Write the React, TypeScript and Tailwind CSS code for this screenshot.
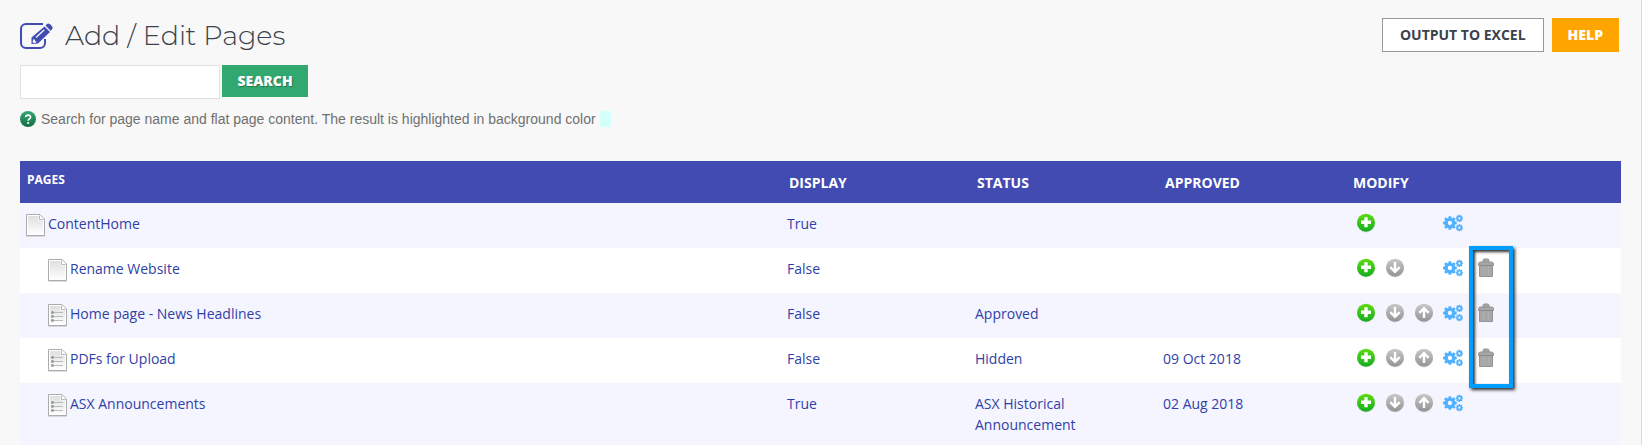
type Action = 'add' | 'down' | 'up' | 'settings' | 'delete';

type Page = {
  name: string;
  child: boolean;
  list: boolean;
  display: string;
  status: string;
  approved: string;
  actions: Action[];
};

const slots: Action[] = ['add', 'down', 'up', 'settings', 'delete'];

const labels: Record<Action, string> = {
  add: 'Add page',
  down: 'Move down',
  up: 'Move up',
  settings: 'Settings',
  delete: 'Delete page',
};

const pages: Page[] = [
  { name: 'ContentHome', child: false, list: false, display: 'True', status: '', approved: '', actions: ['add', 'settings'] },
  { name: 'Rename Website', child: true, list: false, display: 'False', status: '', approved: '', actions: ['add', 'down', 'settings', 'delete'] },
  { name: 'Home page - News Headlines', child: true, list: true, display: 'False', status: 'Approved', approved: '', actions: ['add', 'down', 'up', 'settings', 'delete'] },
  { name: 'PDFs for Upload', child: true, list: true, display: 'False', status: 'Hidden', approved: '09 Oct 2018', actions: ['add', 'down', 'up', 'settings', 'delete'] },
  { name: 'ASX Announcements', child: true, list: true, display: 'True', status: 'ASX Historical Announcement', approved: '02 Aug 2018', actions: ['add', 'down', 'up', 'settings'] },
];

export default function App() {
  return (
    <div className="h-screen overflow-hidden border-r border-[#dcdcdc] bg-[#f8f8f8] pl-5 pr-5 pt-[18px] font-['Open_Sans',sans-serif]">
      <header className="flex items-start justify-between pr-0.5">
        <div className="flex h-9 items-center gap-3">
          <EditIcon />
          <h1 className="font-[Montserrat,Inter,sans-serif] text-[27px] font-light leading-9 text-[#3b424d]">Add / Edit Pages</h1>
        </div>
        <div className="flex gap-2">
          <button className="h-[34px] border border-[#999] bg-white px-[17px] text-sm font-bold text-[#3b424d]">OUTPUT TO EXCEL</button>
          <button className="h-[34px] bg-[#ffa500] px-4 text-sm font-extrabold text-white">HELP</button>
        </div>
      </header>

      <form className="mt-[11px] flex items-start gap-0.5" onSubmit={(e) => e.preventDefault()}>
        <input aria-label="Search pages" className="h-[34px] w-[200px] border border-[#e0e0e0] bg-white px-2 text-sm outline-none" />
        <button className="h-8 w-[86px] bg-[#32a871] text-sm font-extrabold text-white text-shadow-[1px_1px_1px_rgba(0,0,0,0.3)]">SEARCH</button>
      </form>

      <p className="mt-3 flex h-4 items-center font-['Liberation_Sans',Arial,sans-serif] text-sm text-[#707070]">
        <HelpIcon />
        <span className="ml-[5px]">Search for page name and flat page content. The result is highlighted in background color</span>
        <span className="ml-1 h-4 w-[11px] bg-[#d5fffa]" />
      </p>

      <table className="mt-[34px] w-full table-fixed border-collapse text-left text-sm leading-[21px] text-[#303fa8]">
        <thead>
          <tr className="h-[42px] bg-[#414bb2] text-white">
            <th className="pb-1 pl-[7px] text-xs font-bold">PAGES</th>
            <th className="w-[188px] pl-1.5 font-bold">DISPLAY</th>
            <th className="w-[188px] pl-1.5 font-bold">STATUS</th>
            <th className="w-[188px] pl-1.5 font-bold">APPROVED</th>
            <th className="w-[274px] pl-1.5 font-bold">MODIFY</th>
          </tr>
        </thead>
        <tbody>
          {pages.map((page, i) => (
            <PageRow key={page.name} page={page} marked={i === 1} />
          ))}
        </tbody>
      </table>
    </div>
  );
}

function PageRow({ page, marked }: { page: Page; marked: boolean }) {
  return (
    <tr className="align-top odd:bg-[#f5f5ff] even:bg-white">
      <td className={page.child ? 'pl-7' : 'pl-1.5'}>
        <a href="#" className="flex items-start gap-[3px]">
          <span className="pt-[11px]"><PageIcon list={page.list} /></span>
          <span className="pb-3.5 pt-2.5">{page.name}</span>
        </a>
      </td>
      <td className="pb-3.5 pl-1 pt-2.5">{page.display}</td>
      <td className="pb-3.5 pl-1 pr-12 pt-2.5">{page.status}</td>
      <td className="pb-3.5 pl-1 pt-2.5">{page.approved}</td>
      <td className="pl-2.5 pt-2.5">
        <div className="relative flex">
          {slots.map((slot) => (
            <span key={slot} className={slot === 'delete' ? 'ml-[5px] h-5 w-[29px]' : 'h-5 w-[29px]'}>
              {page.actions.includes(slot) && (
                <button aria-label={labels[slot]} className="block">
                  <ActionIcon action={slot} />
                </button>
              )}
            </span>
          ))}
          {/* outline round the delete buttons of three rows */}
          {marked && (
            <div className="pointer-events-none absolute -top-3 left-28 z-10 h-[142px] w-11 border-4 border-[#009dff] shadow-[2px_2px_3px_#333,inset_2px_2px_3px_#333]" />
          )}
        </div>
      </td>
    </tr>
  );
}

/* ── Icons ── */
function EditIcon() {
  return (
    <svg width="33" height="28" viewBox="0 0 33 28" fill="none" aria-hidden="true">
      <path d="M23 2H6A5 5 0 0 0 1 7V21A5 5 0 0 0 6 26H20A5 5 0 0 0 25 21V17" stroke="#414bb2" strokeWidth="2" />
      <path d="M11.500 22V15.500L24.500 4.500L30 10L18 21.500Z" fill="#414bb2" />
      <path d="M25.500 3.500L27 2Q28.500 1 30 2.300L32 4.300Q33.200 5.800 32 7.300L30.600 8.700Z" fill="#414bb2" />
      <path d="M16 15.500L24.300 7.800" stroke="#f8f8f8" strokeWidth="1.300" />
      <path d="M13.300 17.200L14.800 17.600L15.200 19.200L16.700 19.600L15.300 21L12.500 20.500Z" fill="#f8f8f8" />
    </svg>
  );
}

function HelpIcon() {
  return (
    <svg width="16" height="16" viewBox="0 0 16 16" fill="none" aria-hidden="true">
      <defs>
        <linearGradient id="help" x1="0" y1="0" x2="0" y2="1">
          <stop stopColor="#32a871" />
          <stop offset="1" stopColor="#156c43" />
        </linearGradient>
      </defs>
      <circle cx="8" cy="8" r="8" fill="url(#help)" />
      <path d="M5.700 6.200C5.700 3.400 10.500 3.400 10.500 6.200C10.500 7.900 8.200 7.800 8.200 9.700" stroke="#fff" strokeWidth="1.700" />
      <circle cx="8.200" cy="12" r="1.100" fill="#fff" />
    </svg>
  );
}

function PageIcon({ list }: { list: boolean }) {
  return (
    <svg width="19" height="23" viewBox="0 0 19 23" fill="none" aria-hidden="true">
      <defs>
        <linearGradient id="sheet" x1="0" y1="0" x2="0" y2="1">
          <stop stopColor="#dedfdf" />
          <stop offset="1" stopColor="#fdfdfd" />
        </linearGradient>
      </defs>
      <path d="M0 22.500H19" stroke="#000" strokeOpacity=".12" />
      <path d="M.5.5H14L18.500 5V21.500H.5Z" fill="#fff" stroke="#a9abac" />
      <path d="M2 2H12.500V6.500H17V20H2Z" fill="url(#sheet)" />
      <path d="M13.500 1.500V5.500H17.500" stroke="#b5b7b8" />
      {list && (
        <>
          <path d="M3 8.500H15M3 12.500H15M3 16.500H15" stroke="#b9bcbb" />
          <g fill="#959897">
            <circle cx="4.500" cy="8.500" r="1.400" />
            <circle cx="4.500" cy="12.500" r="1.400" />
            <circle cx="4.500" cy="16.500" r="1.400" />
          </g>
        </>
      )}
    </svg>
  );
}

function Gear({ x, y, scale }: { x: number; y: number; scale: number }) {
  return (
    <g transform={`translate(${x} ${y}) scale(${scale})`}>
      <circle r="3.800" stroke="#50b1ff" strokeWidth="3.200" />
      {[0, 45, 90, 135, 180, 225, 270, 315].map((a) => (
        <path key={a} d="M-1.700-4.800L-1.300-7H1.300L1.700-4.800Z" fill="#50b1ff" transform={`rotate(${a})`} />
      ))}
    </g>
  );
}

function ActionIcon({ action }: { action: Action }) {
  if (action === 'settings') {
    return (
      <svg width="20" height="20" viewBox="0 0 20 20" fill="none" className="-ml-px" aria-hidden="true">
        <Gear x={6.9} y={10} scale={0.98} />
        <Gear x={16.4} y={5.4} scale={0.52} />
        <Gear x={16.4} y={14.7} scale={0.52} />
      </svg>
    );
  }

  if (action === 'delete') {
    return (
      <svg width="16" height="20" viewBox="0 0 16 20" fill="none" aria-hidden="true">
        <path d="M5 4V2.500Q5 1 6.500 1H9.500Q11 1 11 2.500V4" fill="#a4a4a4" stroke="#909090" />
        <path d="M.5 7.500V6Q.5 4 2.500 4H13.500Q15.500 4 15.500 6V7.500H14.500V18.500H1.500V7.500Z" fill="#a7a7a7" stroke="#959595" />
        <path d="M1 7.500H15" stroke="#8b8b8b" />
        <path d="M5.500 9V17M10.500 9V17" stroke="#b0b0b0" />
      </svg>
    );
  }

  const add = action === 'add';
  return (
    <svg width="18" height="20" viewBox="0 0 18 20" fill="none" aria-hidden="true">
      <defs>
        <linearGradient id={action} x1="0" y1="0" x2="0" y2="1">
          <stop stopColor={add ? '#5fdc12' : '#c9c9c9'} />
          <stop offset="1" stopColor={add ? '#12ad20' : '#939393'} />
        </linearGradient>
      </defs>
      <circle cx="9" cy="10.500" r="9" fill="#000" fillOpacity=".12" />
      <circle cx="9" cy="9.700" r="9" fill={`url(#${action})`} />
      {add && <path d="M9 4.200V14.200M4 9.200H14" stroke="#fff" strokeWidth="3.400" />}
      {action === 'down' && <path d="M9 4V13.500M4.300 9.200L9 13.800L13.700 9.200" stroke="#fff" strokeWidth="2.400" />}
      {action === 'up' && <path d="M9 15V5.500M4.300 9.800L9 5.200L13.700 9.800" stroke="#fff" strokeWidth="2.400" />}
    </svg>
  );
}
